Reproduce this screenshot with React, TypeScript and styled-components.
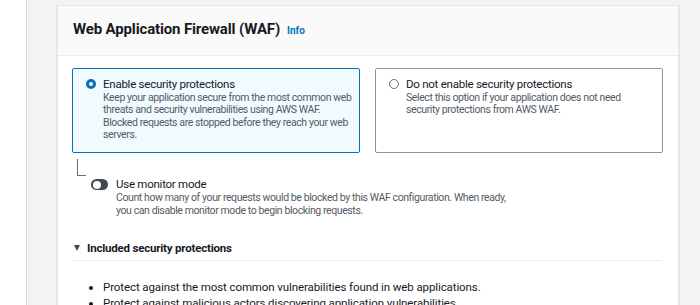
import styled, { createGlobalStyle } from "styled-components";

const GlobalStyle = createGlobalStyle`
  html, body {
    margin: 0;
    padding: 0;
    background: #ffffff;
    font-family: Roboto, "Liberation Sans", Arial, sans-serif;
    color: #16191f;
  }
`;

const Page = styled.div`
  display: flex;
  width: 700px;
  height: 305px;
  overflow: hidden;
`;

const SideStrip = styled.div`
  width: 26px;
  flex-shrink: 0;
  background: #ffffff;
  border-right: 1px solid #d5dbdb;
`;

const Main = styled.div`
  flex: 1;
  background: #f2f3f3;
  padding: 5px 22px 0 30px;
`;

const Panel = styled.div`
  background: #ffffff;
  border: 1px solid #e3e6e6;
  box-shadow: 0 1px 1px rgba(0, 28, 36, 0.25);
  height: 100%;
`;

const PanelHeader = styled.div`
  display: flex;
  align-items: baseline;
  gap: 7px;
  height: 50px;
  box-sizing: border-box;
  padding: 13px 15px 0;
  background: #fafafa;
  border-bottom: 1px solid #eaeded;
`;

const Title = styled.h2`
  margin: 0;
  font-size: 15px;
  font-weight: 700;
  letter-spacing: -0.15px;
  line-height: 20px;
  color: #16191f;
`;

const InfoLink = styled.a`
  font-size: 10px;
  font-weight: 700;
  color: #0073bb;
  text-decoration: none;
`;

const PanelBody = styled.div`
  padding: 12px 15px 0 14px;
`;

const Tiles = styled.div`
  display: grid;
  grid-template-columns: 288px 288px;
  gap: 15px;
`;

const Tile = styled.label<{ selected?: boolean }>`
  display: flex;
  gap: 7px;
  height: 85px;
  box-sizing: border-box;
  padding: 8px 8px 8px 13px;
  border: 1px solid ${(p) => (p.selected ? "#0073bb" : "#879596")};
  border-radius: 2px;
  background: ${(p) => (p.selected ? "#f1faff" : "#ffffff")};
`;

const Radio = styled.span<{ checked?: boolean }>`
  flex-shrink: 0;
  width: 10px;
  height: 10px;
  margin-top: 2px;
  border-radius: 50%;
  box-sizing: border-box;
  border: ${(p) => (p.checked ? "3px solid #0073bb" : "1px solid #687078")};
  background: #ffffff;
`;

const TileText = styled.div`
  display: flex;
  flex-direction: column;
`;

const Label = styled.span`
  font-size: 11.5px;
  line-height: 15px;
  letter-spacing: -0.25px;
  color: #16191f;
`;

const Desc = styled.span<{ lh?: number }>`
  font-size: 10.5px;
  line-height: ${(p) => p.lh ?? 12.4}px;
  letter-spacing: -0.4px;
  color: #545b64;
  white-space: nowrap;
`;

const MonitorBlock = styled.div`
  position: relative;
  display: flex;
  gap: 8px;
  padding: 24px 0 0 19px;
`;

const Connector = styled.span`
  position: absolute;
  left: 5px;
  top: 6px;
  width: 8px;
  height: 16px;
  border-left: 1px solid #687078;
  border-bottom: 1px solid #687078;
`;

const Toggle = styled.span`
  position: relative;
  flex-shrink: 0;
  width: 17px;
  height: 11px;
  margin-top: 2px;
  border-radius: 6px;
  background: #414750;
  &:after {
    content: "";
    position: absolute;
    top: 1.5px;
    left: 1.5px;
    width: 8px;
    height: 8px;
    border-radius: 50%;
    background: #ffffff;
  }
`;

const Section = styled.div`
  margin-top: 23px;
`;

const SectionHeader = styled.div`
  display: flex;
  align-items: center;
  gap: 7px;
  width: 590px;
  padding: 0 0 4px 2px;
  box-sizing: border-box;
  border-bottom: 1px solid #eaeded;
`;

const Caret = styled.span`
  width: 0;
  height: 0;
  border-left: 3.5px solid transparent;
  border-right: 3.5px solid transparent;
  border-top: 6px solid #414750;
`;

const SectionTitle = styled.span`
  font-size: 11.5px;
  font-weight: 700;
  line-height: 15px;
  letter-spacing: -0.2px;
  color: #16191f;
`;

const BulletList = styled.ul`
  margin: 18px 0 0;
  padding-left: 31px;
  font-size: 11.5px;
  line-height: 16px;
  letter-spacing: -0.1px;
  color: #16191f;
`;

export default function App() {
  return (
    <Page>
      <GlobalStyle />
      <SideStrip />
      <Main>
        <Panel>
          <PanelHeader>
            <Title>Web Application Firewall (WAF)</Title>
            <InfoLink href="#">Info</InfoLink>
          </PanelHeader>
          <PanelBody>
            <Tiles>
              <Tile selected>
                <Radio checked />
                <TileText>
                  <Label>Enable security protections</Label>
                  <Desc>
                    Keep your application secure from the most common web
                    <br />
                    threats and security vulnerabilities using AWS WAF.
                    <br />
                    Blocked requests are stopped before they reach your web
                    <br />
                    servers.
                  </Desc>
                </TileText>
              </Tile>
              <Tile>
                <Radio />
                <TileText>
                  <Label>Do not enable security protections</Label>
                  <Desc>
                    Select this option if your application does not need
                    <br />
                    security protections from AWS WAF.
                  </Desc>
                </TileText>
              </Tile>
            </Tiles>
            <MonitorBlock>
              <Connector />
              <Toggle />
              <TileText>
                <Label>Use monitor mode</Label>
                <Desc lh={12.8}>
                  Count how many of your requests would be blocked by this WAF
                  configuration. When ready,
                  <br />
                  you can disable monitor mode to begin blocking requests.
                </Desc>
              </TileText>
            </MonitorBlock>
            <Section>
              <SectionHeader>
                <Caret />
                <SectionTitle>Included security protections</SectionTitle>
              </SectionHeader>
              <BulletList>
                <li>Protect against the most common vulnerabilities found in web applications.</li>
                <li>Protect against malicious actors discovering application vulnerabilities.</li>
              </BulletList>
            </Section>
          </PanelBody>
        </Panel>
      </Main>
    </Page>
  );
}
